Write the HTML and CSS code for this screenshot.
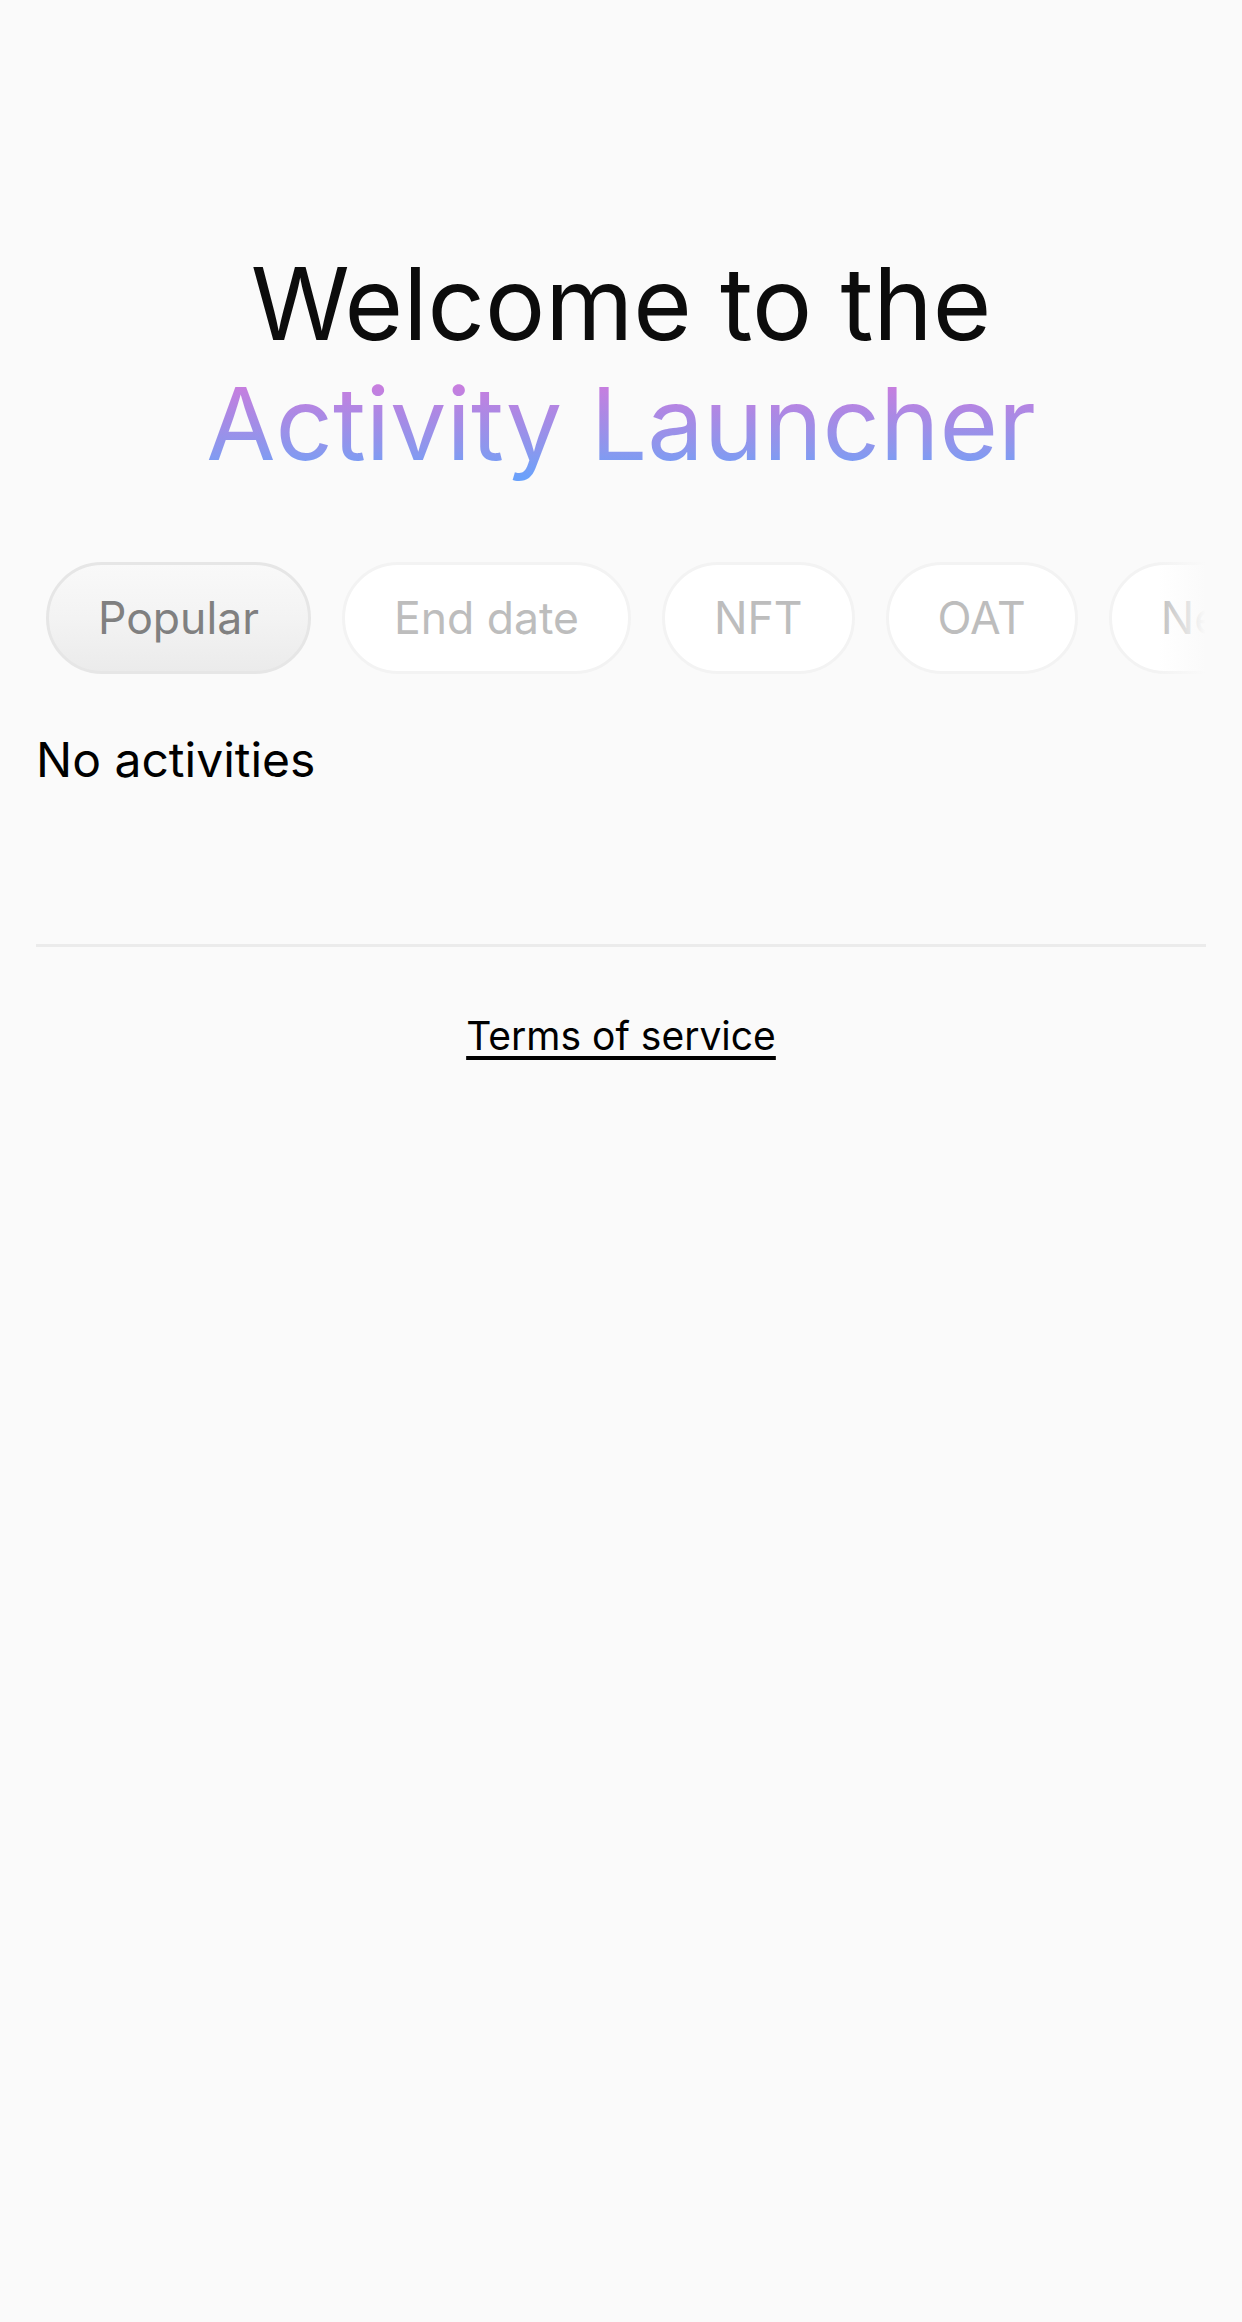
FILE: index.html
```html
<!DOCTYPE html>
<html lang="en">
<head>
<meta charset="utf-8">
<title>Activity Launcher</title>
<link rel="stylesheet" href="styles.css">
</head>
<body>
<main class="page">
  <header class="hero">
    <h1 class="hero-title">
      <span class="hero-line">Welcome to the</span>
      <span class="hero-line hero-accent">Activity Launcher</span>
    </h1>
  </header>

  <nav class="filters">
    <div class="filters-track">
      <button class="pill pill-active">Popular</button>
      <button class="pill">End date</button>
      <button class="pill">NFT</button>
      <button class="pill">OAT</button>
      <button class="pill">New</button>
      <button class="pill">Ended</button>
    </div>
  </nav>

  <section class="activities">
    <p class="empty">No activities</p>
  </section>

  <footer class="footer">
    <a class="footer-link" href="#">Terms of service</a>
  </footer>
</main>
</body>
</html>
```

FILE: styles.css
```css
* {
  box-sizing: border-box;
}

html, body {
  margin: 0;
  padding: 0;
  background: #fafafa;
}

body {
  font-family: Inter, "Noto Sans", "Liberation Sans", sans-serif;
  color: #000;
  min-height: 2322px;
}

.page {
  padding: 0 36px;
}

.hero {
  padding-top: 244px;
  text-align: center;
}

.hero-title {
  margin: 0;
  font-size: 100.5px;
  line-height: 120px;
  font-weight: 400;
  color: #0c0c0c;
}

.hero-line {
  display: block;
}

.hero-accent {
  display: inline-block;
  background: linear-gradient(180deg, #cc7cde 14%, #a88ae5 45%, #8a98ee 72%, #6aa1fb 95%);
  -webkit-background-clip: text;
  background-clip: text;
  color: transparent;
}

.filters {
  position: relative;
  margin-top: 78px;
  margin-right: -8px;
  overflow: hidden;
}

.filters::after {
  content: "";
  position: absolute;
  top: 0;
  right: 0;
  bottom: 0;
  width: 56px;
  background: linear-gradient(90deg, rgba(250, 250, 250, 0), #fafafa 85%);
}

.filters-track {
  display: flex;
  gap: 31px;
  padding-left: 10px;
  width: max-content;
}

.pill {
  flex: none;
  height: 112px;
  padding: 0 49px;
  border: 3px solid #f3f3f3;
  border-radius: 56px;
  background: #ffffff;
  font-family: inherit;
  font-size: 44.5px;
  font-weight: 400;
  color: #bdbdbd;
  line-height: 1;
}

.pill-active {
  background: linear-gradient(180deg, #f9f9f9 0%, #f3f3f3 50%, #ebebeb 100%);
  border-color: #e6e6e6;
  color: #808080;
}

.activities {
  padding-top: 50px;
  min-height: 270px;
}

.empty {
  margin: 0;
  font-size: 48px;
  line-height: 72px;
  color: #000;
}

.footer {
  border-top: 3px solid #ebebeb;
  padding-top: 59px;
  text-align: center;
}

.footer-link {
  font-size: 39px;
  line-height: 60px;
  color: #000;
  text-decoration: underline;
  text-decoration-thickness: 4px;
  text-underline-offset: 6px;
}
```
